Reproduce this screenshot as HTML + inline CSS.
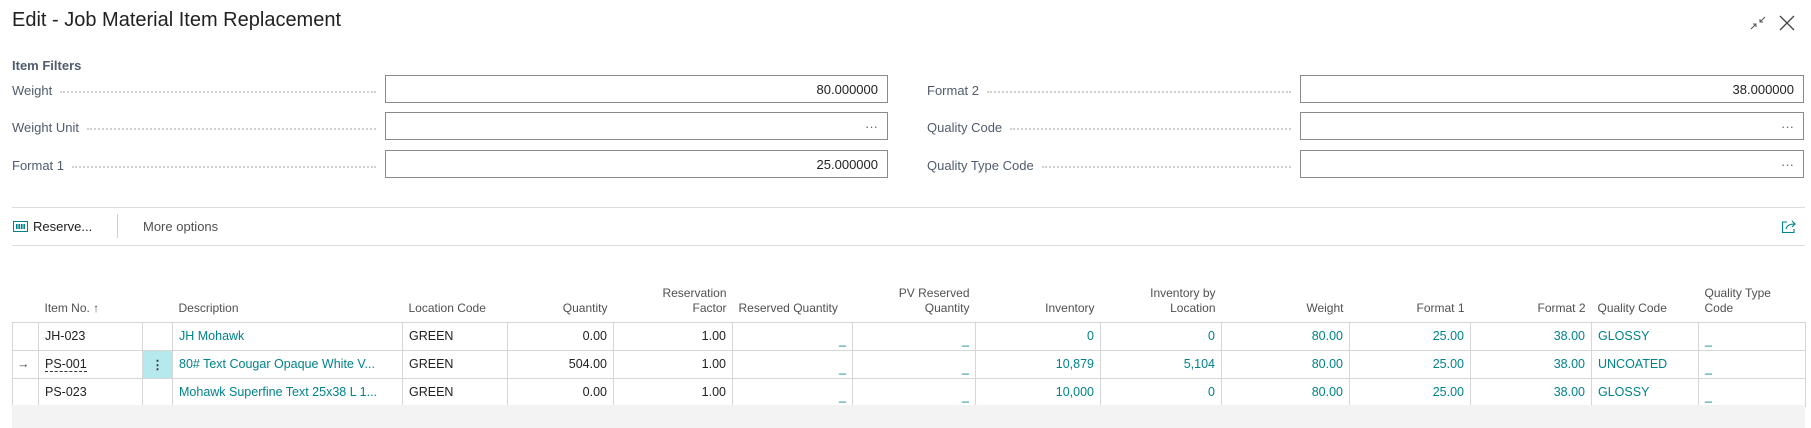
<!DOCTYPE html>
<html><head><meta charset="utf-8"><style>
*{box-sizing:border-box;margin:0;padding:0}
body{width:1811px;height:428px;background:#fff;font-family:"Liberation Sans",sans-serif;color:#212121;position:relative;overflow:hidden}
.abs{position:absolute}
.title{left:12px;top:9px;font-size:20px;color:#212121}
.lbl{position:absolute;font-size:13px;color:#505c6d;display:flex;align-items:flex-end;height:18px}
.lbl .dots{flex:1;border-bottom:2px dotted #d0d0d0;margin:0 6px 5px 8px}
.box{position:absolute;height:28px;border:1px solid #8a8a8a;font-size:13px;text-align:right;padding:6px 9px 0 0;color:#212121}
.sep{position:absolute;left:12px;width:1793px;height:1px;background:#dcdcdc}
table{position:absolute;left:12px;top:280px;border-collapse:collapse;table-layout:fixed;font-size:12.5px}
th{font-weight:normal;color:#505050;font-size:12px;height:42px;vertical-align:bottom;padding:0 6px 6px;line-height:15px}
td{border:1px solid #d6d6d6;height:28px;padding:0 6px;white-space:nowrap;overflow:hidden;text-overflow:ellipsis}
.r{text-align:right}.l{text-align:left}
.t{color:#00838a}
.u{color:#00838a;vertical-align:bottom;padding-bottom:3px}
</style></head><body>
<div class="abs title">Edit - Job Material Item Replacement</div>
<svg class="abs" style="left:1749px;top:14px" width="18" height="18" viewBox="0 0 18 18" fill="none" stroke="#555" stroke-width="1"><path d="M2 15L7 10M4 10H7V13"/><path d="M16 3L11 8M11 5V8H14"/></svg>
<svg class="abs" style="left:1778px;top:14px" width="18" height="18" viewBox="0 0 18 18" stroke="#444" stroke-width="1.3"><path d="M2 2L16 16M16 2L2 16"/></svg>

<div class="abs" style="left:12px;top:58px;font-size:13px;color:#505c6d;font-weight:bold">Item Filters</div>
<div class="lbl" style="left:12px;top:80px;width:370px">Weight<span class="dots"></span></div>
<div class="lbl" style="left:12px;top:117px;width:370px">Weight Unit<span class="dots"></span></div>
<div class="lbl" style="left:12px;top:155px;width:370px">Format 1<span class="dots"></span></div>
<div class="box" style="left:385px;top:75px;width:503px">80.000000</div>
<div class="box" style="left:385px;top:112px;width:503px;color:#666">···</div>
<div class="box" style="left:385px;top:150px;width:503px">25.000000</div>

<div class="lbl" style="left:927px;top:80px;width:370px">Format 2<span class="dots"></span></div>
<div class="lbl" style="left:927px;top:117px;width:370px">Quality Code<span class="dots"></span></div>
<div class="lbl" style="left:927px;top:155px;width:370px">Quality Type Code<span class="dots"></span></div>
<div class="box" style="left:1300px;top:75px;width:504px">38.000000</div>
<div class="box" style="left:1300px;top:112px;width:504px;color:#666">···</div>
<div class="box" style="left:1300px;top:150px;width:504px;color:#666">···</div>

<div class="sep" style="top:207px"></div>
<svg class="abs" style="left:13px;top:221px" width="15" height="11" viewBox="0 0 15 11"><rect x="0.5" y="0.5" width="14" height="10" fill="none" stroke="#00838a"/><rect x="3" y="3" width="9" height="5" fill="#00838a"/><path d="M5 3V8M7.5 3V8M10 3V8" stroke="#fff" stroke-width="0.8"/></svg>
<div class="abs" style="left:33px;top:219px;font-size:13px">Reserve...</div>
<div class="abs" style="left:117px;top:214px;width:1px;height:24px;background:#cfcfcf"></div>
<div class="abs" style="left:143px;top:219px;font-size:13px;color:#505050">More options</div>
<svg class="abs" style="left:1781px;top:219px" width="16" height="15" viewBox="0 0 16 15" fill="none" stroke="#00838a" stroke-width="1.1"><path d="M6 3H1.5V13.5H13V10"/><path d="M5 10C6 6 9 5 14 5M11 2L14 5L11 8"/></svg>
<div class="sep" style="top:245px"></div>

<table>
<colgroup><col style="width:26px"><col style="width:104px"><col style="width:30px"><col style="width:230px"><col style="width:105px"><col style="width:106px"><col style="width:119px"><col style="width:120px"><col style="width:123px"><col style="width:125px"><col style="width:121px"><col style="width:128px"><col style="width:121px"><col style="width:121px"><col style="width:107px"><col style="width:107px"></colgroup>
<tr><th></th><th class="l">Item No. &#8593;</th><th></th><th class="l">Description</th><th class="l">Location Code</th><th class="r">Quantity</th><th class="r">Reservation<br>Factor</th><th class="l">Reserved Quantity</th><th class="r">PV Reserved<br>Quantity</th><th class="r">Inventory</th><th class="r">Inventory by<br>Location</th><th class="r">Weight</th><th class="r">Format 1</th><th class="r">Format 2</th><th class="l">Quality Code</th><th class="l">Quality Type<br>Code</th></tr>
<tr><td></td><td>JH-023</td><td></td><td class="t">JH Mohawk</td><td>GREEN</td><td class="r">0.00</td><td class="r">1.00</td><td class="r u">_</td><td class="r u">_</td><td class="r t">0</td><td class="r t">0</td><td class="r t">80.00</td><td class="r t">25.00</td><td class="r t">38.00</td><td class="t">GLOSSY</td><td class="u">_</td></tr>
<tr><td style="color:#444;padding:0 4px">&#8594;</td><td><span style="border-bottom:1px dashed #333">PS-001</span></td><td style="background:#b5e9ee;text-align:center;color:#333;font-weight:bold">&#8942;</td><td class="t">80# Text Cougar Opaque White V...</td><td>GREEN</td><td class="r">504.00</td><td class="r">1.00</td><td class="r u">_</td><td class="r u">_</td><td class="r t">10,879</td><td class="r t">5,104</td><td class="r t">80.00</td><td class="r t">25.00</td><td class="r t">38.00</td><td class="t">UNCOATED</td><td class="u">_</td></tr>
<tr><td></td><td>PS-023</td><td></td><td class="t">Mohawk Superfine Text 25x38 L 1...</td><td>GREEN</td><td class="r">0.00</td><td class="r">1.00</td><td class="r u">_</td><td class="r u">_</td><td class="r t">10,000</td><td class="r t">0</td><td class="r t">80.00</td><td class="r t">25.00</td><td class="r t">38.00</td><td class="t">GLOSSY</td><td class="u">_</td></tr>
</table>
<div class="abs" style="left:12px;top:405px;width:1793px;height:23px;background:#f3f3f3"></div>
</body></html>
